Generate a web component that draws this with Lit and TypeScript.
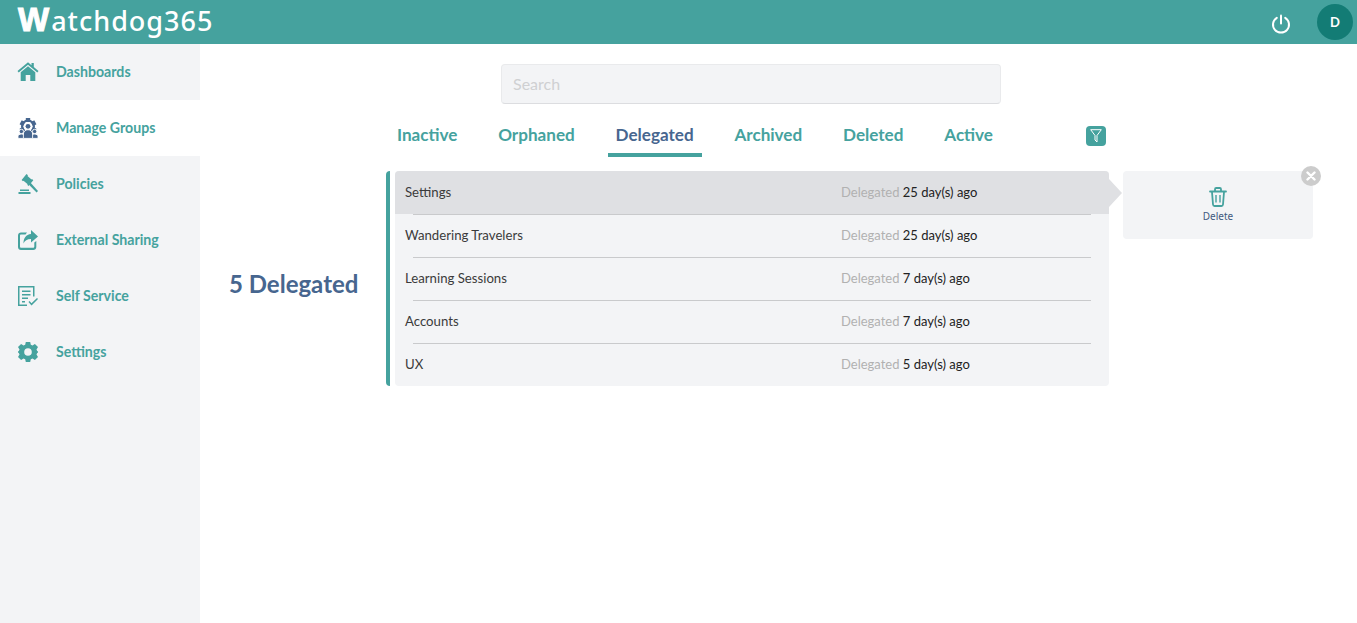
import { LitElement, html, css, svg } from "lit";
import { customElement } from "lit/decorators.js";

const T = "#45a29e";
const teeth = [0, 60, 120, 180, 240, 300];
const icons: Record<string, unknown> = {
  home: svg`<path d="M10 .3 13.500 3.200V1H15.800V5.100L20.500 9.100 19.300 10.500 10 2.800.7 10.500-.5 9.100Z"/><path fill-rule="evenodd" d="M10 4.300 17.300 10.300V19H12.300V13H7.700V19H2.700V10.300Z"/>`,
  groups: svg`${teeth.map((a) => svg`<rect x="7.800" y="0" width="4.400" height="4" transform="rotate(${a} 10 8.500)"/>`)}<path fill-rule="evenodd" d="M10 1.500A7 7 0 1 0 10 15.500 7 7 0 1 0 10 1.500ZM10 3.700A4.800 4.800 0 1 1 10 13.300 4.800 4.800 0 1 1 10 3.700Z"/><circle cx="10" cy="8.300" r="2.400"/><g stroke="#fff" stroke-width=".9"><circle cx="3.400" cy="13.500" r="2.200"/><circle cx="16.600" cy="13.500" r="2.200"/><path d="M0 20.400V18.600C0 17 1.500 16 3.400 16S7 17 7 18.600V20.400ZM20 20.400V18.600C20 17 18.500 16 16.600 16S13 17 13 18.600V20.400Z"/><path d="M5.400 20.400V16C5.400 13.500 7.500 11.700 10 11.700S14.600 13.500 14.600 16V20.400Z"/></g>`,
  gavel: svg`<path d="M8.500 0 10 1.300 9.500 2 13.500 5.500 14 5 15.300 6.200 10.500 12 9.200 10.800 9.700 10.200 5.500 6.700 5 7.200 3.600 6Z"/><path d="M11.500 7.600 20 17 18.600 18.500 10 9.800Z"/><path d="M2 15.500H11V17H2ZM.5 18H12.500V20H.5Z"/>`,
  share: svg`<path d="M13 0 20 6.500 13 12.500V9C9 9 6.800 10.500 5.500 13.500 5.500 8 8 4.500 13 4Z"/><path fill-rule="evenodd" d="M3 2.500H9L7.500 4.500H3C2.400 4.500 2 5 2 5.500V16.500C2 17.200 2.500 17.800 3.200 17.800H15C15.800 17.800 16.300 17.200 16.300 16.500V12.500L18.300 11V17C18.300 18.800 17 20 15.300 20H3C1.300 20 0 18.800 0 17V5.500C0 3.800 1.300 2.500 3 2.500Z"/>`,
  self: svg`<path fill-rule="evenodd" d="M0 0H16.500V10.500H15V1.500H1.500V18.500H9V20H0Z"/><path d="M4 4.500H12.500V5.900H4ZM4 8H12.500V9.400H4ZM4 11.500H10V12.900H4ZM4 15H7V16.400H4Z"/><path d="M10.500 16 11.500 15 13.500 17.200 19 12 20 13 13.500 19.400Z"/>`,
  gear: svg`<path fill-rule="evenodd" d="M7.800 0H12.200L12.800 2.700 14.500 3.500 16.900 2 20 5 18.500 7.400 19.200 9 20 9.600V10.400L19.200 11 18.500 12.600 20 15 16.900 18 14.500 16.500 12.800 17.300 12.200 20H7.800L7.200 17.300 5.500 16.500 3.100 18 0 15 1.500 12.600.8 11 0 10.400V9.600L.8 9 1.500 7.400 0 5 3.100 2 5.500 3.500 7.200 2.700ZM10 6.200A3.800 3.800 0 1 0 10 13.800 3.800 3.800 0 0 0 10 6.200Z"/>`,
};

const nav = [
  ["Dashboards", "home"],
  ["Manage Groups", "groups"],
  ["Policies", "gavel"],
  ["External Sharing", "share"],
  ["Self Service", "self"],
  ["Settings", "gear"],
];
const tabs = ["Inactive", "Orphaned", "Delegated", "Archived", "Deleted", "Active"];
const rows: [string, number][] = [
  ["Settings", 25],
  ["Wandering Travelers", 25],
  ["Learning Sessions", 7],
  ["Accounts", 7],
  ["UX", 5],
];

@customElement("app-root")
export class AppRoot extends LitElement {
  static styles = css`
    :host { display: block; height: 623px; overflow: hidden; background: #fff; font-family: Lato, sans-serif; }
    .top { height: 44px; background: #45a29e; display: flex; align-items: center; padding: 0 4px 0 18px; }
    .logo { font-family: "Noto Sans", sans-serif; font-weight: 500; font-size: 27px; letter-spacing: 1px; color: #fff; line-height: 30px; height: 30px; padding-bottom: 5px; display: flex; align-items: baseline; white-space: nowrap; }
    .logo b { font-family: "Liberation Sans", sans-serif; font-weight: 700; font-size: 33px; line-height: 30px; letter-spacing: 2px; -webkit-text-stroke: 1px #fff; }
    .spacer { flex: 1; }
    .power { width: 20px; height: 20px; margin-right: 26px; display: block; margin-top: 3px; }
    .avatar { width: 36px; height: 36px; border-radius: 50%; background: #137c75; color: #fff; display: flex; align-items: center; justify-content: center; font-size: 13px; font-weight: 700; }
    .body { display: flex; height: 579px; }
    .side { width: 200px; background: #f3f4f6; flex: none; }
    .item { height: 56px; display: flex; align-items: center; padding-left: 18px; gap: 18px; color: #45a29e; font-size: 14.150px; font-weight: 700; }
    .item span { padding-bottom: 2px; }
    .item.on { background: #fff; }
    .item svg { width: 20px; height: 20px; fill: #45a29e; flex: none; overflow: visible; }
    .item.on svg { fill: #47668f; }
    .main { flex: 1; display: grid; grid-template-columns: 186px 723px 204px; grid-template-rows: auto auto; align-content: start; align-items: start; padding-top: 20px; }
    .head { grid-column: 2; display: flex; flex-direction: column; }
    .search { width: 500px; height: 40px; box-sizing: border-box; margin-left: 115px; background: #f3f4f6; border: 1px solid #e9eaec; border-bottom-color: #dcdde0; border-radius: 4px; color: #cfd0d2; font-size: 16px; line-height: 38px; padding-left: 11px; }
    .tabs { display: flex; align-items: center; gap: 24.800px; margin-top: 10px; padding-left: 3px; height: 43px; position: relative; }
    .tab { padding: 0 8px; height: 43px; box-sizing: border-box; line-height: 42px; font-size: 17.100px; font-weight: 700; color: #45a29e; white-space: nowrap; }
    .tab.on { color: #47668f; border-bottom: 4px solid #45a29e; border-radius: 5px 5px 0 0 / 4px 4px 0 0; }
    .filter { width: 20px; height: 20px; background: #45a29e; border-radius: 4px; margin-left: auto; margin-right: 3px; display: flex; align-items: center; justify-content: center; margin-top: 1px; }
    .filter svg { width: 12px; height: 14px; }
    .count { grid-column: 1; grid-row: 2; margin-top: 19px; height: 215px; display: flex; align-items: center; padding-left: 29px; color: #47668f; font-size: 24px; font-weight: 700; white-space: nowrap; }
    .listwrap { grid-column: 2; grid-row: 2; margin-top: 14px; border-left: 4px solid #45a29e; border-radius: 4px 0 0 4px; padding-left: 5px; }
    .list { background: #f3f4f6; border-radius: 4px; }
    .row { height: 43px; display: grid; grid-template-columns: 436px 1fr; align-items: center; padding-left: 10px; padding-bottom: 2px; box-sizing: border-box; font-size: 13.200px; color: #3b3b3b; position: relative; }
    .row.on { background: #dfe0e3; border-radius: 4px 4px 0 0; }
    .row.on::after { content: ""; position: absolute; left: 100%; top: 8px; border-left: 13px solid #dfe0e3; border-top: 14px solid transparent; border-bottom: 14px solid transparent; }
    .row:not(:last-child)::before { content: ""; position: absolute; left: 18px; right: 18px; bottom: -1px; border-bottom: 1px solid #c9cacc; }
    .when { color: #b1b1b1; font-size: 13px; }
    .when span { color: #222; }
    .panelcol { grid-column: 3; grid-row: 2; margin-top: 14px; padding-left: 14px; }
    .panel { width: 190px; height: 68px; background: #f3f4f6; border-radius: 4px; position: relative; display: flex; flex-direction: column; align-items: center; padding-top: 16px; box-sizing: border-box; }
    .panel .trash { width: 18px; height: 20px; display: block; }
    .panel .lbl { font-family: "Noto Sans", sans-serif; font-size: 10px; color: #3f5a80; margin-top: 2px; line-height: 14px; }
    .close { position: absolute; right: -8px; top: -5px; width: 20px; height: 20px; border-radius: 50%; background: #cccccc; display: flex; align-items: center; justify-content: center; }
    .close svg { width: 10px; height: 10px; display: block; }
  `;

  render() {
    return html`
      <div class="top">
        <div class="logo"><b>W</b><span>atchdog365</span></div>
        <div class="spacer"></div>
        <svg class="power" viewBox="0 0 20 20" fill="none" stroke="#fff" stroke-width="2" stroke-linecap="round">
          <path d="M5.800 3.800a8 8 0 1 0 8.400 0"/><path d="M10 1.500v8"/>
        </svg>
        <div class="avatar">D</div>
      </div>
      <div class="body">
        <div class="side">
          ${nav.map(([n, i]) => html`<div class="item ${n === "Manage Groups" ? "on" : ""}"><svg viewBox="0 0 20 20">${icons[i]}</svg><span>${n}</span></div>`)}
        </div>
        <div class="main">
          <div class="head">
            <div class="search">Search</div>
            <div class="tabs">
              ${tabs.map((t) => html`<div class="tab ${t === "Delegated" ? "on" : ""}">${t}</div>`)}
              <div class="filter"><svg viewBox="0 0 12 14" fill="none" stroke="#fff" stroke-width="1"><path d="M.7.700H11.300L7 6.500V13L5 11V6.500Z"/></svg></div>
            </div>
          </div>
          <div class="count">5 Delegated</div>
          <div class="listwrap">
            <div class="list">
              ${rows.map(([n, d], i) => html`<div class="row ${i === 0 ? "on" : ""}"><div>${n}</div><div class="when">Delegated <span>${d} day(s) ago</span></div></div>`)}
            </div>
          </div>
          <div class="panelcol">
            <div class="panel">
              <div class="close"><svg viewBox="0 0 10 10" stroke="#fff" stroke-width="2.400" stroke-linecap="round"><path d="M1.500 1.500 8.500 8.500M8.500 1.500 1.500 8.500"/></svg></div>
              <svg class="trash" viewBox="0 0 18 20" fill="none" stroke="${T}" stroke-width="1.800" stroke-linejoin="round">
                <path d="M1 4.500H17" stroke-linecap="round"/><path d="M6 4V2.200C6 1.500 6.500 1 7.200 1H10.800C11.500 1 12 1.500 12 2.200V4"/><path d="M3 5 4 17.500C4.100 18.400 4.700 19 5.500 19H12.500C13.300 19 13.900 18.400 14 17.500L15 5"/><path d="M7 8V15.500M11 8V15.500" stroke-width="1.400"/>
              </svg>
              <div class="lbl">Delete</div>
            </div>
          </div>
        </div>
      </div>
    `;
  }
}
